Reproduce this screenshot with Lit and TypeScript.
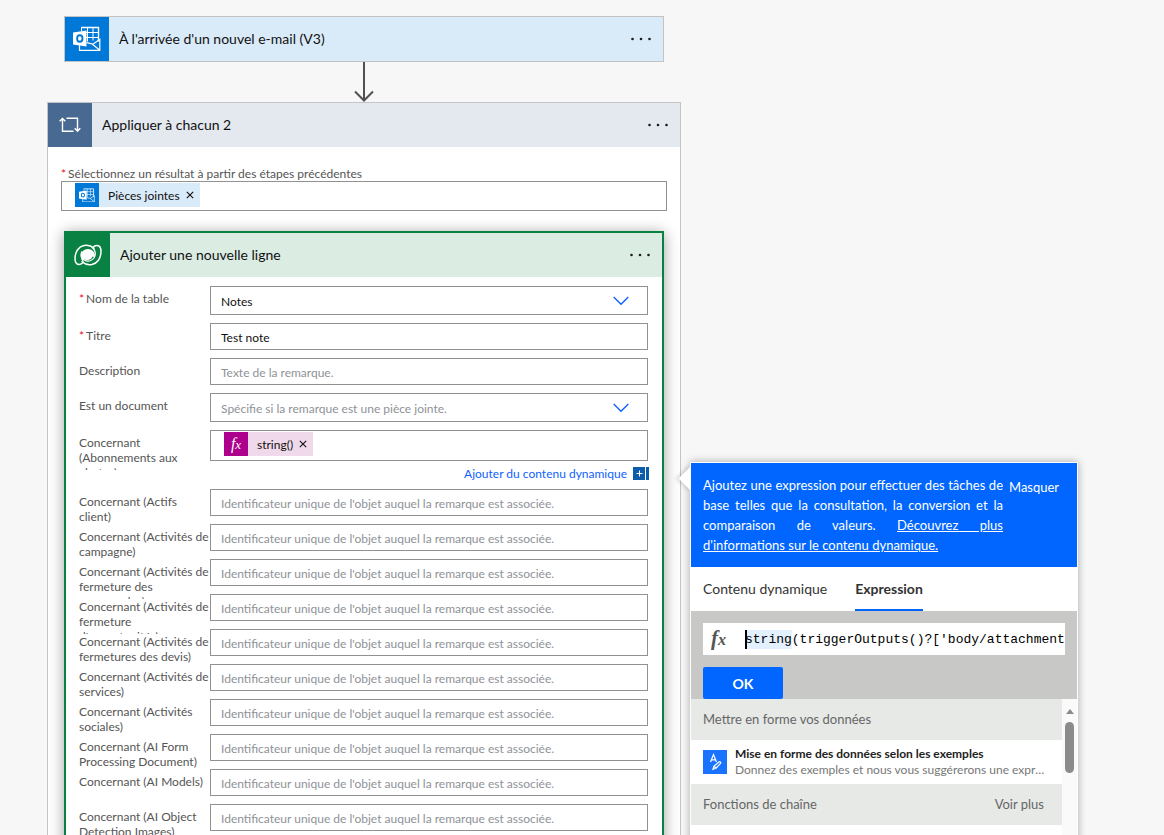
import { LitElement, html, svg, css, nothing } from "lit";
import { customElement, state } from "lit/decorators.js";

interface Field {
  id: string;
  label: string;
  placeholder?: string;
  value?: string;
  required?: boolean;
  kind?: "text" | "select" | "token";
}

const OBJECT_HINT = "Identificateur unique de l'objet auquel la remarque est associée.";

const FIELDS: Field[] = [
  { id: "table", label: "Nom de la table", value: "Notes", required: true, kind: "select" },
  { id: "title", label: "Titre", value: "Test note", required: true },
  { id: "description", label: "Description", placeholder: "Texte de la remarque." },
  {
    id: "isdocument",
    label: "Est un document",
    placeholder: "Spécifie si la remarque est une pièce jointe.",
    kind: "select",
  },
  { id: "alerts", label: "Concernant (Abonnements aux alertes)", kind: "token" },
  ...[
    "Concernant (Actifs client)",
    "Concernant (Activités de campagne)",
    "Concernant (Activités de fermeture des commandes)",
    "Concernant (Activités de fermeture d'opportunités)",
    "Concernant (Activités de fermetures des devis)",
    "Concernant (Activités de services)",
    "Concernant (Activités sociales)",
    "Concernant (AI Form Processing Document)",
    "Concernant (AI Models)",
    "Concernant (AI Object Detection Images)",
  ].map((label, i) => ({ id: `regarding${i}`, label, placeholder: OBJECT_HINT })),
];

const outlookIcon = svg`
  <svg viewBox="0 0 28 26" fill="none" stroke="#fff" aria-hidden="true">
    <path d="M8.5 1.5h17v14" stroke-width="1.4" />
    <path d="M8.5 1v4M13 6.5h12.500M13 11.500h12.500M14.500 1.500v14M20 1.500v13" stroke-width="1" />
    <path d="M6.500 19v5.300h20.300V13.500l-7 4.700-6-1.500M19.500 18.200l7.300 6" stroke-width="1.2" />
    <path d="M0 6.500 13.500 4.500v16L0 18.600z" fill="#fff" stroke="none" />
    <ellipse cx="6.800" cy="12.500" rx="2.700" ry="3.300" stroke="#0078d7" stroke-width="1.900" />
  </svg>`;

const loopIcon = svg`
  <svg viewBox="0 0 22 16" fill="none" stroke="#fff" stroke-width="1.400" aria-hidden="true">
    <path d="M14.500 14.300H3.500V1.500M0.700 4.300l2.800-2.900 2.800 2.900" />
    <path d="M7.500 1.300h11v13M15.700 11.300l2.800 2.900 2.800-2.900" />
  </svg>`;

const dataverseIcon = svg`
  <svg viewBox="0 0 28 22" fill="none" stroke="#fff" stroke-width="1.500" stroke-linecap="round" aria-hidden="true">
    <path d="M20 4.200C17 1.500 13.300.9 10 1.500 4.800 2.500 1.100 7.500 1 14.500c0 3.300 1.300 5.800 3.800 6 2 .1 3.400-.8 4.700-2.200" />
    <path d="M8 17.800c3 2.700 6.700 3.300 10 2.700 5.200-1 8.900-6 9-13 0-3.300-1.300-5.800-3.800-6-2-.1-3.400.8-4.700 2.200" />
    <path d="M9.500 18.300C6.300 15.500 5.900 11.200 8 8c2.300-3.300 6.600-4 9.600-2 3.400 2.200 3.900 5.600 2.600 8.300-.6-2-2.200-2.200-3-.9-1.700 2.600-5 3.300-7 1.600-.8 1.200-1 2.200-.7 3.300z" fill="#fff" stroke="none" />
    <path d="M18.500 3.700c3.200 2.800 3.600 7.100 1.500 10.300-2.300 3.300-6.600 4-9.600 2-3.400-2.200-3.900-5.600-2.600-8.300" stroke-width="1.200" />
    <circle cx="14" cy="11" r="4.800" fill="#fff" stroke="none" />
  </svg>`;

const chevronIcon = svg`
  <svg class="chevron" viewBox="0 0 16 10" fill="none" stroke="#0f62fe" stroke-width="1.400" aria-hidden="true">
    <path d="M.7 1 8 8.300 15.300 1" />
  </svg>`;

const closeIcon = svg`
  <svg viewBox="0 0 8 8" stroke="#111" stroke-width="1.100" aria-hidden="true">
    <path d="M.8.8l6.400 6.400M7.200.8.8 7.200" />
  </svg>`;

const dotsIcon = svg`
  <svg viewBox="0 0 20 4" fill="#1b1b1b" aria-hidden="true">
    <circle cx="1.500" cy="2" r="1.300" /><circle cx="10" cy="2" r="1.300" /><circle cx="18.500" cy="2" r="1.300" />
  </svg>`;

const formatIcon = svg`
  <svg viewBox="0 0 24 24" fill="none" stroke="#fff" stroke-width="1.200" aria-hidden="true">
    <path d="M7.500 12 10.500 4.500 13.500 12M8.500 9.800h4" />
    <path d="M10 19.200l1-3.200 5.200-4.200c.8-.5 2 .7 1.300 1.600L13 18.200zM11 16l2 2.200" />
  </svg>`;

@customElement("app-root")
export class AppRoot extends LitElement {
  @state() private expression = "string(triggerOutputs()?['body/attachments'])";

  static styles = css`
    :host {
      display: block;
      height: 100vh;
      overflow: hidden;
      background: #f7f7f7;
      color: #111;
      font: 12px/15px Lato, "Open Sans", sans-serif;
    }
    *, *::before, *::after { box-sizing: border-box; }
    button, input, select { font: inherit; color: inherit; margin: 0; }
    button { border: 0; padding: 0; background: none; cursor: pointer; }
    svg { display: block; }

    .flow {
      display: flex;
      flex-direction: column;
      align-items: center;
      width: 634px;
      margin-left: 47px;
      padding-top: 16px;
    }
    .header { display: flex; align-items: center; height: 44px; }
    .header h2 { flex: 1; margin: 0 0 0 10px; font-size: 14px; line-height: 20px; font-weight: 400; }
    .badge { display: grid; place-items: center; width: 44px; height: 44px; flex: none; }
    .more { width: 20px; margin-right: 12px; padding: 8px 0; }

    .trigger { width: 600px; border: 1px solid #c3c3c3; background: #d9eaf8; }
    .trigger .badge { background: #0078d7; }
    .trigger .badge svg { width: 28px; }
    .arrow { width: 20px; height: 40px; }

    .scope { align-self: stretch; border: 1px solid #c4c4c4; background: #fff; }
    .scope > .header { background: #e4e8ef; }
    .scope > .header .badge { background: #486991; }
    .scope > .header .badge svg { width: 22px; }
    .scope-body { padding: 19px 13px 0; }
    .required { color: #e81123; margin-right: 2px; }
    .caption { display: block; color: #555; }
    .tokenbox { display: flex; align-items: flex-start; border: 1px solid #919191; background: #fff; padding: 1px 13px; }
    .source { height: 30px; }
    .token { display: flex; align-items: center; height: 24px; padding-right: 6px; gap: 9px; background: #d9eaf8; }
    .token .glyph { display: grid; place-items: center; width: 24px; height: 24px; background: #0078d7; }
    .token .glyph svg { width: 16px; }
    .token button { width: 8px; margin-left: -3px; }
    .token.fx { background: #f1d9ec; }
    .token.fx .glyph { background: #ad008c; color: #fff; }
    .fxmark { font: italic 16px/20px "Liberation Serif", serif; }
    .fxmark small { font-size: 13px; }

    .action {
      margin: 20px 3px 0;
      border: 2px solid #088142;
      background: #fff;
      box-shadow: 0 2px 14px rgba(0, 0, 0, 0.38);
    }
    .action > .header { background: #dbece3; }
    .action > .header .badge { background: #088142; }
    .action > .header .badge svg { width: 28px; }
    .fields { display: flex; flex-direction: column; gap: 8px; padding: 9px 14px 40px 13px; }
    .row { display: grid; grid-template: 100% / 131px 1fr; height: 27px; }
    .row.select { height: 29px; }
    .row.token-row { height: 51px; }
    .row label, .row .label { height: 40px; padding-top: 5px; overflow: hidden; color: #555; }
    .control { position: relative; }
    .control > input, .control > select {
      display: block;
      width: 100%;
      height: 100%;
      border: 1px solid #919191;
      border-radius: 0;
      background: #fff;
      padding: 2px 10px 0;
      outline: 0;
      appearance: none;
    }
    .control > select { padding-right: 40px; }
    ::placeholder, .control > select.empty { color: #8e9297; opacity: 1; }
    .chevron { position: absolute; right: 19px; top: 10px; width: 16px; pointer-events: none; }
    .control > .tokenbox { height: 31px; }
    .dynamic { display: flex; justify-content: flex-end; align-items: center; gap: 6px; height: 24px; margin-right: -1px; color: #0f62fe; }
    .dynamic a { color: inherit; text-decoration: none; }
    .plus { display: flex; gap: 1px; height: 13px; }
    .plus::after { content: ""; width: 3px; background: #0b5cab; }
    .plus svg { width: 12px; height: 13px; background: #0b5cab; }

    .callout {
      position: absolute;
      z-index: 2;
      left: calc(100% + 42px);
      top: 32px;
      width: 388px;
      border: 1px solid #fff;
      background: #fff;
      box-shadow: 0 0 8px rgba(0, 0, 0, 0.32);
      color: #333;
    }
    .callout::before {
      content: "";
      position: absolute;
      z-index: -1;
      left: -9px;
      top: 7px;
      width: 17px;
      height: 17px;
      background: #fff;
      transform: rotate(45deg);
      box-shadow: -2px 2px 4px rgba(0, 0, 0, 0.14);
    }
    .intro { display: flex; gap: 6px; padding: 12px; background: #06f; color: #fff; font-size: 13px; line-height: 20px; }
    .intro p { width: 300px; margin: 0; text-align: justify; }
    .intro a { color: inherit; }
    .intro button { align-self: flex-start; padding-top: 2px; }
    .tabs { display: flex; gap: 28px; height: 44px; padding: 0 12px; background: #fff; font-size: 14px; }
    .tabs button { border-bottom: 2px solid transparent; }
    .tabs button[aria-selected="true"] { border-color: #06f; font-weight: 700; }
    .editor { height: 88px; padding: 12px 12px 0; background: #c8c9c7; }
    .formula { display: flex; align-items: center; height: 32px; margin-bottom: 12px; background: #fff; }
    .formula .fxmark { width: 42px; padding-left: 8px; font-weight: 700; font-size: 21px; color: #555; }
    .formula .fxmark small { font-size: 16px; }
    .formula input {
      flex: 1;
      min-width: 0;
      height: 19px;
      border: 0;
      padding: 0;
      outline: 0;
      color: #000;
      font: 13px/19px "Liberation Mono", monospace;
      background: linear-gradient(#000, #000) 0 0 / 2px 100% no-repeat,
        linear-gradient(#e3f0fd, #e3f0fd) 0 0 / 6ch 100% no-repeat;
    }
    .ok { width: 80px; height: 32px; border-radius: 2px; background: #06f; color: #fff; font-size: 14px; font-weight: 700; }
    .results { display: flex; height: 240px; }
    .list { flex: 1; min-width: 0; }
    .group { display: flex; justify-content: space-between; align-items: center; height: 41px; padding: 0 18px 0 12px; background: #e7e9e7; color: #666; font-size: 13px; }
    .suggestion { display: flex; align-items: center; gap: 8px; width: 100%; height: 44px; padding: 0 12px; text-align: left; }
    .suggestion .glyph { width: 24px; height: 24px; flex: none; background: #1a73ff; }
    .suggestion div { min-width: 0; }
    .suggestion b, .suggestion small { display: block; line-height: 16px; font-size: 12px; overflow: hidden; text-overflow: ellipsis; white-space: nowrap; }
    .suggestion b { color: #222; }
    .suggestion small { color: #777; }
    .scrollbar { display: flex; flex-direction: column; align-items: center; gap: 8px; width: 15px; padding-top: 10px; background: #fafafa; }
    .scrollbar::before { content: ""; border: 4px solid transparent; border-top: 0; border-bottom: 5px solid #8b8b8b; }
    .scrollbar::after { content: ""; width: 9px; height: 51px; border-radius: 5px; background: #8b8b8b; }
  `;

  private header(title: string, icon: unknown) {
    return html`<div class="header">
      <span class="badge">${icon}</span>
      <h2>${title}</h2>
      <button class="more" aria-label="Plus d'options">${dotsIcon}</button>
    </div>`;
  }

  private star(required?: boolean) {
    return required ? html`<span class="required">*</span>` : nothing;
  }

  private fxMark() {
    return html`<span class="fxmark">f<small>x</small></span>`;
  }

  private row(f: Field) {
    if (f.kind === "token") {
      return html`<div class="row token-row">
        <span class="label" id=${f.id}>${f.label}</span>
        <div class="control">
          <div class="tokenbox" role="group" aria-labelledby=${f.id}>
            <span class="token fx">
              <span class="glyph">${this.fxMark()}</span>string()
              <button aria-label="Supprimer">${closeIcon}</button>
            </span>
          </div>
          <div class="dynamic">
            <a href="#">Ajouter du contenu dynamique</a>
            <span class="plus">
              <svg viewBox="0 0 12 13" stroke="#fff" aria-hidden="true"><path d="M3.500 6.500h6M6.500 3.500v6" /></svg>
            </span>
          </div>
          ${this.callout()}
        </div>
      </div>`;
    }
    if (f.kind === "select") {
      return html`<div class="row select">
        <label for=${f.id}>${this.star(f.required)}${f.label}</label>
        <div class="control">
          <select id=${f.id} class=${f.value ? "" : "empty"}>
            <option>${f.value ?? f.placeholder}</option>
          </select>
          ${chevronIcon}
        </div>
      </div>`;
    }
    return html`<div class="row">
      <label for=${f.id}>${this.star(f.required)}${f.label}</label>
      <div class="control">
        <input id=${f.id} type="text" .value=${f.value ?? ""} placeholder=${f.placeholder ?? ""} />
      </div>
    </div>`;
  }

  private callout() {
    return html`<section class="callout">
      <div class="intro">
        <p>
          Ajoutez une expression pour effectuer des tâches de base telles que la consultation, la
          conversion et la comparaison de valeurs.
          <a href="#">Découvrez plus d'informations sur le contenu dynamique.</a>
        </p>
        <button>Masquer</button>
      </div>
      <div class="tabs" role="tablist">
        <button role="tab" aria-selected="false">Contenu dynamique</button>
        <button role="tab" aria-selected="true">Expression</button>
      </div>
      <div class="editor">
        <div class="formula">
          ${this.fxMark()}
          <input
            type="text"
            aria-label="Expression"
            spellcheck="false"
            .value=${this.expression}
            @input=${(e: Event) => (this.expression = (e.target as HTMLInputElement).value)}
          />
        </div>
        <button class="ok">OK</button>
      </div>
      <div class="results">
        <div class="list">
          <div class="group"><span>Mettre en forme vos données</span></div>
          <button class="suggestion">
            <span class="glyph">${formatIcon}</span>
            <div>
              <b>Mise en forme des données selon les exemples</b>
              <small>Donnez des exemples et nous vous suggérerons une expression à utiliser</small>
            </div>
          </button>
          <div class="group"><span>Fonctions de chaîne</span><button>Voir plus</button></div>
        </div>
        <div class="scrollbar"></div>
      </div>
    </section>`;
  }

  render() {
    return html`<main class="flow">
      <section class="trigger">${this.header("À l'arrivée d'un nouvel e-mail (V3)", outlookIcon)}</section>
      <svg class="arrow" viewBox="0 0 20 40" fill="none" stroke="#505050" stroke-width="2" aria-hidden="true">
        <path d="M10 0v38M1 29.500l9 9 9-9" />
      </svg>
      <section class="scope">
        ${this.header("Appliquer à chacun 2", loopIcon)}
        <div class="scope-body">
          <span class="caption" id="source">${this.star(true)}Sélectionnez un résultat à partir des étapes précédentes</span>
          <div class="tokenbox source" role="group" aria-labelledby="source">
            <span class="token">
              <span class="glyph">${outlookIcon}</span>Pièces jointes
              <button aria-label="Supprimer">${closeIcon}</button>
            </span>
          </div>
          <section class="action">
            ${this.header("Ajouter une nouvelle ligne", dataverseIcon)}
            <div class="fields">${FIELDS.map((f) => this.row(f))}</div>
          </section>
        </div>
      </section>
    </main>`;
  }
}
